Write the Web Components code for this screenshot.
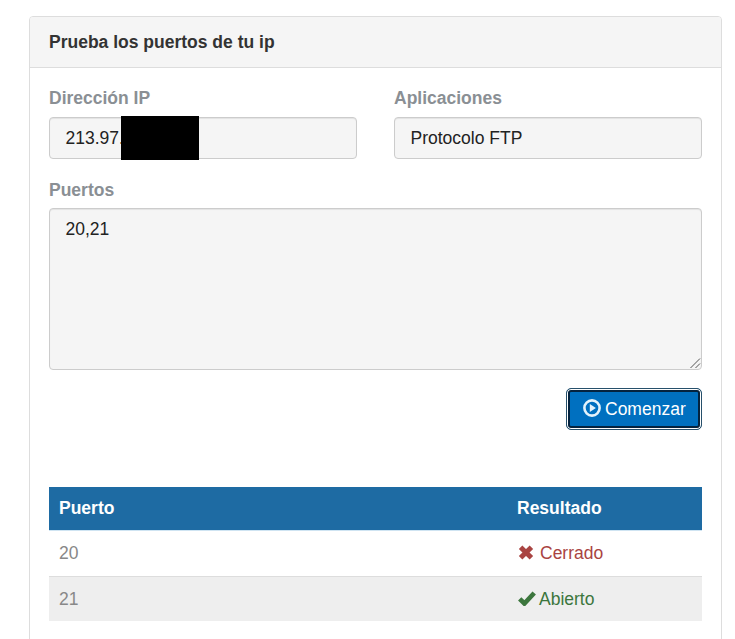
<!DOCTYPE html>
<html lang="es">
<head>
<meta charset="utf-8">
<title>Prueba los puertos</title>
<style>
  html, body { margin: 0; height: 639px; overflow: hidden; background: #fff; }
  body { font-family: "Liberation Sans", Arial, sans-serif; font-size: 17.5px; }
</style>
</head>
<body>
<port-panel heading="Prueba los puertos de tu ip">
  <div style="display:grid;grid-template-columns:308px 308px;column-gap:37px">
    <form-field label="Dirección IP"><text-box value="213.97."><span class="mask" style="position:absolute;left:71px;top:-2px;width:78px;height:44px;background:#000"></span></text-box></form-field>
    <form-field label="Aplicaciones"><text-box value="Protocolo FTP"></text-box></form-field>
  </div>
  <form-field label="Puertos" style="margin-top:20px"><area-box value="20,21" style="margin-top:-1px"></area-box></form-field>
  <div style="display:flex;justify-content:flex-end;margin-top:18px">
    <start-button>Comenzar</start-button>
  </div>
  <result-table style="margin-top:57px">
    <result-row port="20" state="closed">Cerrado</result-row>
    <result-row port="21" state="open" striped>Abierto</result-row>
  </result-table>
</port-panel>

<script>
class PortPanel extends HTMLElement {
  constructor() {
    super();
    this.shadowDOM = this.attachShadow({ mode: "open" });
  }
  connectedCallback() {
    this.shadowDOM.innerHTML = `
      <style>
        :host {
          display: block;
          box-sizing: border-box;
          width: 693px;
          height: 640px;
          margin: 16px 0 0 29px;
          background: #fff;
          border: 1px solid #ddd;
          border-radius: 4px;
          color: #333;
        }
        .head {
          height: 51px;
          box-sizing: border-box;
          padding: 0 19px;
          display: flex;
          align-items: center;
          font-size: 17.5px;
          font-weight: bold;
          background: #f5f5f5;
          border-bottom: 1px solid #ddd;
          border-radius: 3px 3px 0 0;
        }
        .body { padding: 19px 19px 0; }
      </style>
      <div class="head">${this.getAttribute("heading")}</div>
      <div class="body"><slot></slot></div>`;
  }
}

class FormField extends HTMLElement {
  constructor() {
    super();
    this.shadowDOM = this.attachShadow({ mode: "open" });
  }
  connectedCallback() {
    this.shadowDOM.innerHTML = `
      <style>
        :host { display: block; }
        label {
          display: block;
          height: 22px;
          line-height: 22px;
          margin-bottom: 8px;
          font-size: 17.5px;
          font-weight: bold;
          color: #8a8f94;
        }
      </style>
      <label>${this.getAttribute("label")}</label>
      <slot></slot>`;
  }
}

class TextBox extends HTMLElement {
  constructor() {
    super();
    this.shadowDOM = this.attachShadow({ mode: "open" });
  }
  connectedCallback() {
    this.shadowDOM.innerHTML = `
      <style>
        :host {
          display: block;
          position: relative;
          box-sizing: border-box;
          height: 42px;
          padding: 0 15.5px;
          line-height: 40px;
          font-size: 17.5px;
          color: #222;
          background: #f5f5f5;
          border: 1px solid #ccc;
          border-radius: 4px;
          box-shadow: inset 0 1px 1px rgba(0, 0, 0, .075);
        }
      </style>
      ${this.getAttribute("value")}<slot></slot>`;
  }
}

class AreaBox extends HTMLElement {
  constructor() {
    super();
    this.shadowDOM = this.attachShadow({ mode: "open" });
  }
  connectedCallback() {
    this.shadowDOM.innerHTML = `
      <style>
        :host {
          display: block;
          position: relative;
          box-sizing: border-box;
          height: 162px;
          padding: 10px 15.5px;
          line-height: 20px;
          font-size: 17.5px;
          color: #222;
          background: #f5f5f5;
          border: 1px solid #ccc;
          border-radius: 4px;
          box-shadow: inset 0 1px 1px rgba(0, 0, 0, .075);
        }
        svg { position: absolute; right: 0; bottom: 0; }
      </style>
      ${this.getAttribute("value")}
      <svg width="12" height="12" viewBox="0 0 12 12" fill="none" stroke="#555" stroke-width="1">
        <path d="M1.5 11 11 1.5M6.5 11 11 6.5"/>
      </svg>`;
  }
}

class StartButton extends HTMLElement {
  constructor() {
    super();
    this.shadowDOM = this.attachShadow({ mode: "open" });
  }
  connectedCallback() {
    this.shadowDOM.innerHTML = `
      <style>
        :host {
          display: flex;
          align-items: center;
          box-sizing: border-box;
          width: 136px;
          height: 42px;
          padding-left: 16px;
          gap: 4px;
          font-size: 17.5px;
          color: #fff;
          background: #0070c0;
          border: 1px solid #27506b;
          border-radius: 5px;
          box-shadow: inset 0 0 0 1px #fff, inset 0 0 0 3px #04233f;
        }
        svg { flex: none; margin-top: -3px; }
      </style>
      <svg width="18" height="18" viewBox="0 0 18 18">
        <circle cx="9" cy="9" r="7.6" fill="none" stroke="#e4f3fb" stroke-width="2.6"/>
        <path d="M6.8 5.1 12.9 9l-6.1 3.9z" fill="#e4f3fb"/>
      </svg>
      <slot></slot>`;
  }
}

class ResultTable extends HTMLElement {
  constructor() {
    super();
    this.shadowDOM = this.attachShadow({ mode: "open" });
  }
  connectedCallback() {
    this.shadowDOM.innerHTML = `
      <style>
        :host { display: block; font-size: 17.5px; }
        .head {
          display: grid;
          grid-template-columns: 458px 1fr;
          box-sizing: border-box;
          height: 44px;
          align-items: center;
          padding-left: 10px;
          font-weight: bold;
          color: #fff;
          background: #1e6ba3;
          border-bottom: 1px solid #cfe4f2;
        }
      </style>
      <div class="head"><span>Puerto</span><span>Resultado</span></div>
      <slot></slot>`;
  }
}

class ResultRow extends HTMLElement {
  constructor() {
    super();
    this.shadowDOM = this.attachShadow({ mode: "open" });
  }
  connectedCallback() {
    const open = this.getAttribute("state") === "open";
    const icon = open
      ? `<svg width="18" height="16" viewBox="0 0 18 16"><path d="M1.7 8.9 6.4 13.5 16.2 3" fill="none" stroke="#3c763d" stroke-width="4.7"/></svg>`
      : `<svg width="16" height="15" viewBox="0 0 16 15"><path d="M2.6 2.2 13.4 12.8M13.4 2.2 2.6 12.8" fill="none" stroke="#a94442" stroke-width="5"/></svg>`;
    this.shadowDOM.innerHTML = `
      <style>
        :host {
          display: grid;
          grid-template-columns: 458px 1fr;
          align-items: center;
          box-sizing: border-box;
          height: 45px;
          padding-left: 10px;
          color: #888;
          border-top: 1px solid #ddd;
          background: ${this.hasAttribute("striped") ? "#eee" : "#fff"};
        }
        :host(:first-child) { border-top: 0; }
        .state { display: flex; align-items: center; gap: ${open ? "3px" : "6px"}; margin-left: 1px; color: ${open ? "#3c763d" : "#a94442"}; }
        svg { flex: none; margin-top: -2px; }
      </style>
      <span>${this.getAttribute("port")}</span>
      <span class="state">${icon}<slot></slot></span>`;
  }
}

customElements.define("port-panel", PortPanel);
customElements.define("form-field", FormField);
customElements.define("text-box", TextBox);
customElements.define("area-box", AreaBox);
customElements.define("start-button", StartButton);
customElements.define("result-table", ResultTable);
customElements.define("result-row", ResultRow);
</script>
</body>
</html>
